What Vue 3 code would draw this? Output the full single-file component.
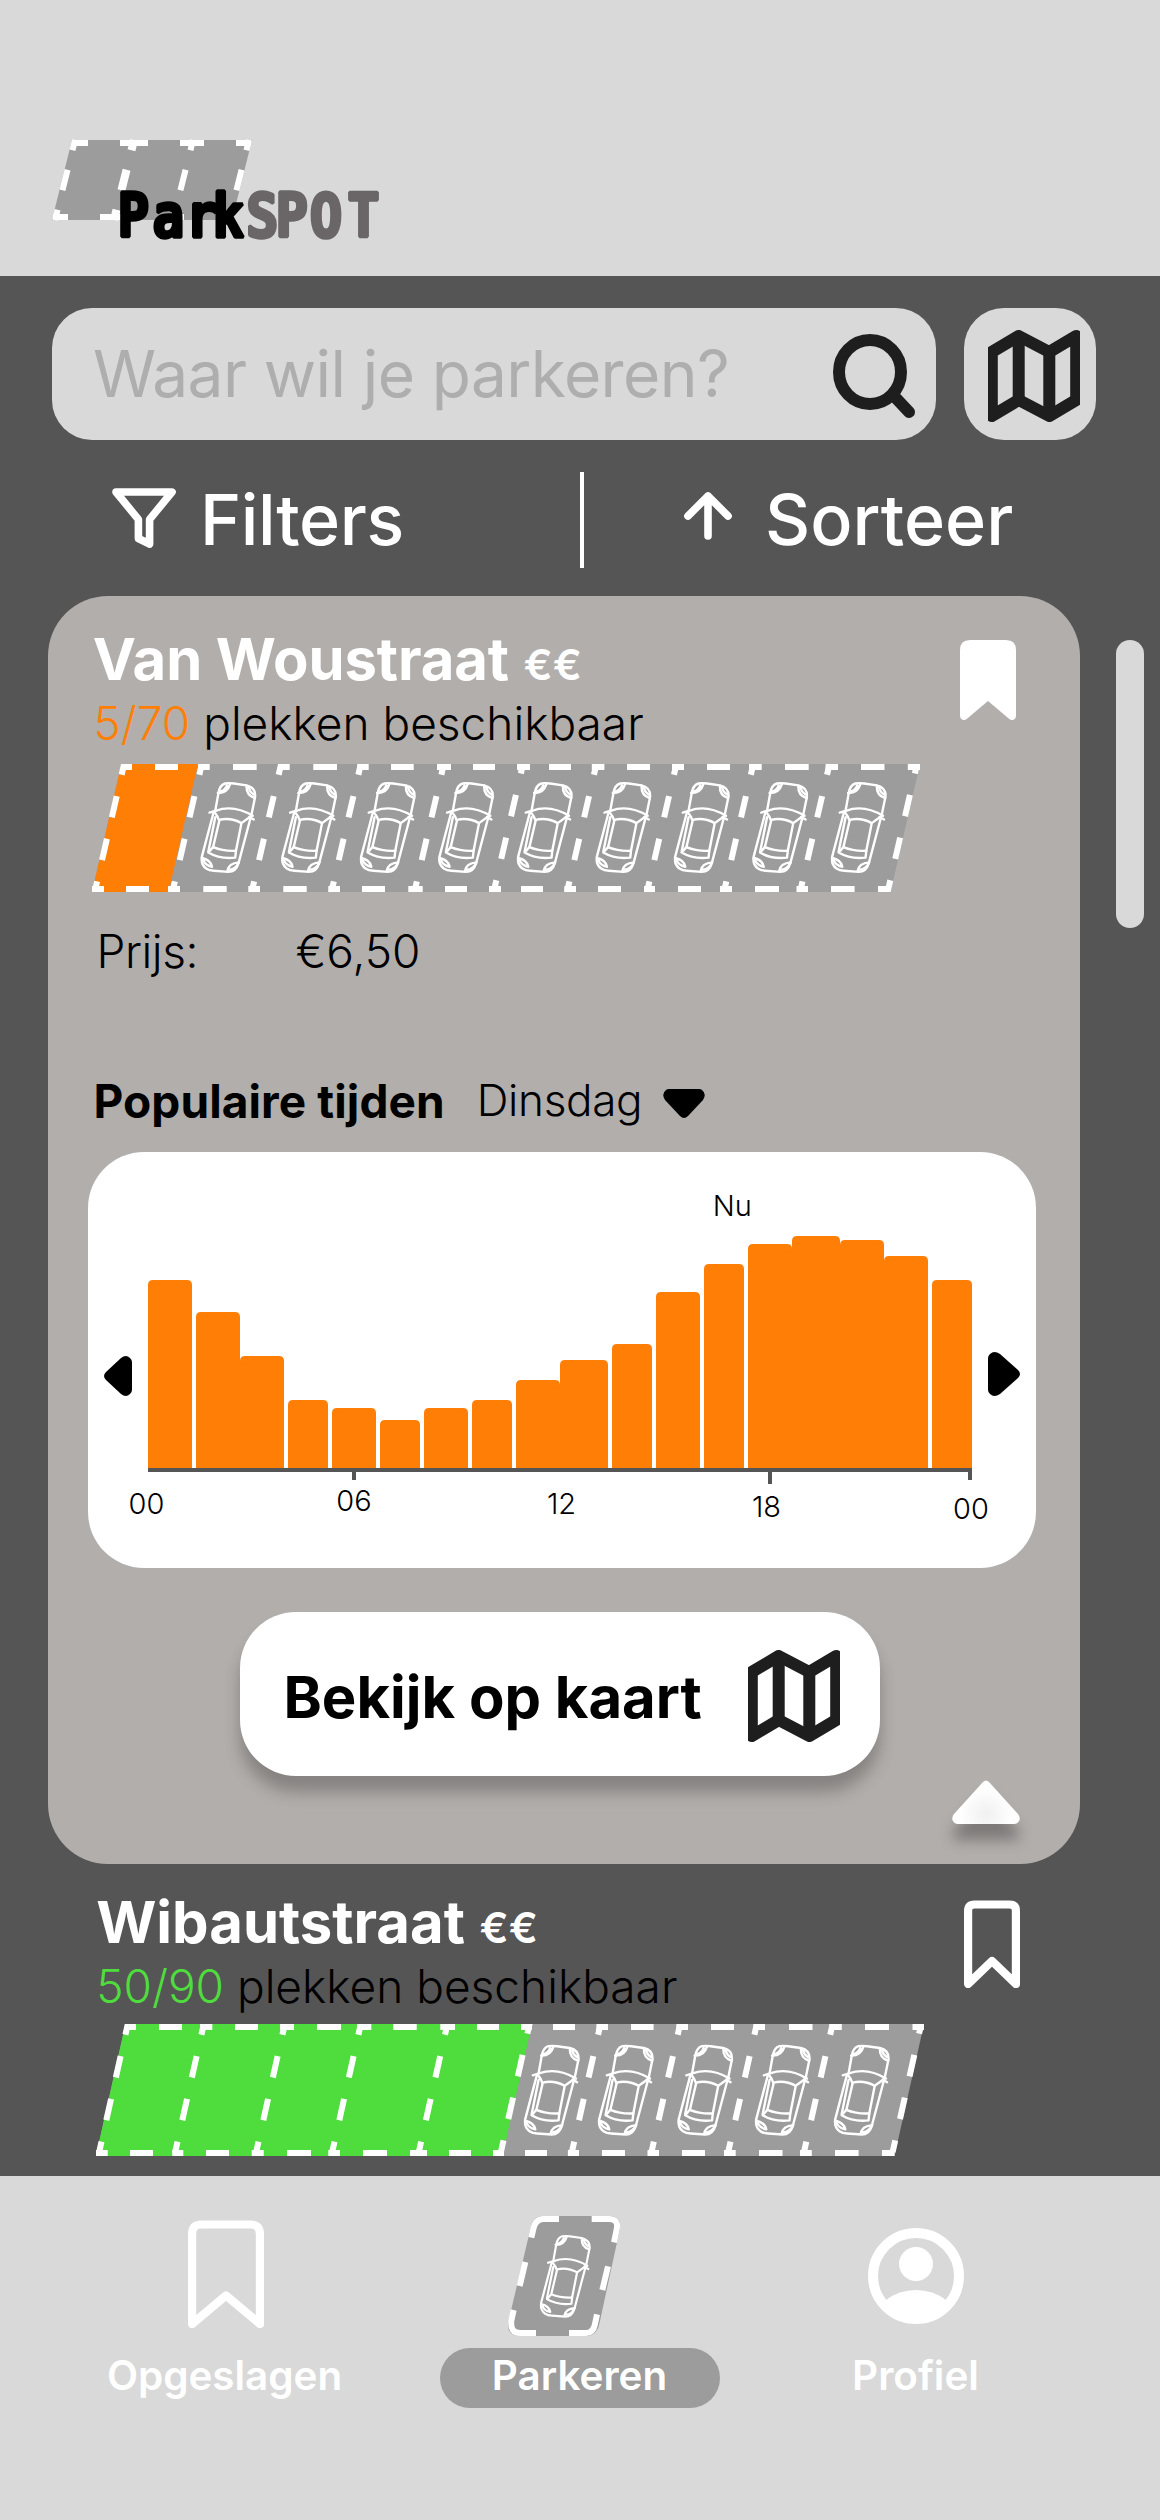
<script setup>
const seg = (list, y) => list.map(([a, b]) => `M${a} ${y}H${b}`).join('')

// Parking strips: dash and car coordinates in px, relative to the strip
const strips = {
  woustraat: {
    w: 828, h: 128, slant: 29.4, fill: '#ff7f06', fillTo: 106, carY: 17.3,
    edges: [29.3, 107, 186.3, 266, 349, 501.6, 581.6, 658.5, 734.7],
    rightEdges: [428.5, 822.5],
    top: seg([[29, 40], [63, 86], [106, 117.7], [141, 164.7], [186, 197.7], [221.3, 245], [265.3, 276.7], [299, 321.7], [345, 359], [381, 403], [425, 438], [457, 479], [499.8, 512.4], [535, 558], [580, 592], [615, 638], [657, 669.7], [693, 716.7], [733.6, 746], [769, 792.5], [815.8, 828]], 3),
    bottom: seg([[0, 12], [34, 57], [76, 88], [111.3, 134.7], [156.3, 168], [191.3, 214.7], [236.3, 248], [270, 293], [316.3, 330.7], [353, 375], [397, 409], [429, 451], [472.3, 484], [506, 529], [552, 563], [586, 609], [628, 640], [663, 687], [704.5, 716], [739, 762.6], [786, 798.6]], 125),
    cars: [108, 188.6, 267.3, 345.6, 424.3, 503, 581.3, 659.8, 738.3]
  },
  wibautstraat: {
    w: 828, h: 132, slant: 29.5, fill: '#4fdd3d', fillTo: 436, carY: 20,
    edges: [29, 105, 186, 262, 348.6, 501.7, 581.3, 658, 733.8],
    rightEdges: [431, 822.7],
    top: seg([[29, 40], [63, 86], [104, 116.3], [139, 162], [184, 198], [221, 245], [261.3, 275.3], [297.3, 320.7], [344.3, 359], [381, 403], [425, 436], [457, 479], [500.4, 512], [535, 557.6], [580.4, 592], [615, 638], [657.6, 669], [693, 716.5], [733.6, 745.8], [769, 793], [816.5, 828]], 3),
    bottom: seg([[0, 11.7], [34, 57], [76.3, 87.3], [110, 133], [155.7, 167.7], [191, 215], [232.3, 244], [267, 291], [314, 331], [353, 375], [397, 408], [429, 451], [471.9, 483], [506, 529], [551.5, 563], [586, 609], [628, 639.7], [663, 686.5], [704, 715.8], [739, 762.6], [786, 798.6]], 129),
    cars: [427.3, 501.3, 580.8, 658.3, 737.3]
  }
}
const stripFor = (k) => strips[k]

// [left, width, height] of each hour bar
const bars = [[60, 44, 188], [108, 44, 156], [152, 44, 112], [200, 40, 68], [244, 44, 60], [292, 40, 48], [336, 44, 60], [384, 40, 68], [428, 44, 88], [472, 48, 108], [524, 40, 124], [568, 44, 176], [616, 40, 204], [660, 44, 224], [704, 48, 232], [752, 44, 228], [796, 44, 212], [844, 40, 188]]
const bar = ([x, w, h]) => `M${x} 316V${316 - h + 5}q0 -5 5 -5h${w - 10}q5 0 5 5V316Z`
const hours = [['00', 58.5, 361.5], ['06', 266, 358.5], ['12', 473.5, 361.5], ['18', 678.5, 364.5], ['00', 883, 367]]
</script>

<template>
  <div class="app">
    <svg class="defs" width="0" height="0">
      <symbol id="car" viewBox="-3 -3 156 253">
        <g fill="none" stroke="#fff" stroke-width="6.6" stroke-linecap="round" stroke-linejoin="round">
          <path d="M39 78L48 28Q52 7 66 3Q75 1 90 3L125 8Q150 14 149 38L138 92" />
          <path d="M46 29Q72 30 80 4M53 25Q66 22 71 8M125 9Q124 36 148 43M132 14Q133 26 145 33" />
          <path d="M23 83L40 78Q90 60 142 92M133 95L145 102" />
          <path d="M34 84L2 205Q-1 226 14 237Q22 243 35 243L75 246Q96 246 103 222L136 98" />
          <path d="M37 82Q46 92 50 106L33 178M39 96L20 190" />
          <path d="M50 103Q82 96 111 112L136 94M111 112L96 188" />
          <path d="M33 178Q62 190 96 188L94 207Q52 212 20 193L33 178" />
          <path d="M3 208Q27 214 30 232Q12 228 6 214M72 244Q76 222 104 220Q96 238 78 240" />
        </g>
      </symbol>
      <symbol id="map" viewBox="0 0 92 92">
        <g fill="none" stroke="#1e1e1e" stroke-width="12" stroke-linejoin="round">
          <path d="M3.8 22V86L30.7 70L61.3 86L88.2 70V6L61.3 22L30.7 6Z" />
          <path d="M30.7 6V70M61.3 22V86" />
        </g>
      </symbol>
    </svg>

    <header class="top">
      <svg class="logo" width="360" height="124" viewBox="0 0 360 124">
        <path d="M20 0H200L180 80H0Z" fill="#9c9c9c" />
        <g fill="none" stroke="#fff" stroke-width="6">
          <path d="M20 3H36M68 3H96M128 3H152M184 3H199M1 77H16M48 77H76M113 77H132M165 77H180" />
          <g stroke-dasharray="10.5 20.1 21.2 20.1 10.5">
            <path d="M23 0L3 80M141 0L121 80M197 0L177 80" />
            <path d="M82 0L62 80" stroke-width="8" />
          </g>
        </g>
        <g class="wordmark">
          <text y="97.2" x="74.5 114.3 152.3 182.4" transform="scale(.88 1)">Park</text>
          <text y="97.2" x="215.500 248.3 286.5 328" transform="scale(.9 1)" class="spot">SPOT</text>
        </g>
      </svg>
    </header>

    <div class="searchrow">
      <div class="search">
        <span class="placeholder">Waar wil je parkeren?</span>
        <svg width="82" height="84" viewBox="0 0 82 84" fill="none" stroke="#1e1e1e" stroke-width="12" stroke-linecap="round">
          <ellipse cx="37" cy="38" rx="31" ry="32" />
          <path d="M60 61L76 78" />
        </svg>
      </div>
      <div class="mapbtn"><svg width="92" height="92"><use href="#map" /></svg></div>
    </div>

    <div class="tools">
      <div class="tool filter">
        <svg width="64" height="60" viewBox="0 0 64 60" fill="none" stroke="#fff" stroke-width="7.6" stroke-linejoin="round">
          <path d="M60 4H4L26.4 31.4V50.5L37.6 56V31.4Z" />
        </svg>
        <span>Filters</span>
      </div>
      <div class="divider"></div>
      <div class="tool sort">
        <svg width="48" height="48" viewBox="0 0 48 48" fill="none" stroke="#fff" stroke-width="7.6" stroke-linecap="round" stroke-linejoin="round">
          <path d="M24 44V4M4 24L24 4L44 24" />
        </svg>
        <span>Sorteer</span>
      </div>
    </div>

    <main class="content">
      <div class="list">
        <section class="card">
          <div class="head">
            <div class="info">
              <h2>Van Woustraat<span class="euro">€€</span></h2>
              <p class="spots"><span class="few">5/70</span> plekken beschikbaar</p>
            </div>
            <svg class="mark" width="56" height="80" viewBox="0 0 56 80">
              <path fill="#fff" d="M0 10Q0 0 10 0H46Q56 0 56 10V76Q55.5 80 52 80Q50.5 80 49 78.7L28 61L7 78.7Q5.5 80 4 80Q.5 80 0 76Z" />
            </svg>
          </div>

          <svg v-for="s in [stripFor('woustraat')]" :key="s.fill" class="strip" :width="s.w" :height="s.h" :viewBox="`0 0 ${s.w} ${s.h}`">
            <path :d="`M${s.slant} 0H${s.w}L${s.w - s.slant} ${s.h}H0Z`" fill="#9c9c9c" />
            <path :d="`M${s.slant} 0H${s.fillTo}L${s.fillTo - s.slant} ${s.h}H0Z`" :fill="s.fill" />
            <g fill="none" stroke="#fff" stroke-width="6">
              <path :d="s.top" /><path :d="s.bottom" />
              <path v-for="x in s.edges" :key="x" class="edge" :d="`M${x + 2.8} 0l-${s.slant} ${s.h}`" />
              <path v-for="x in s.rightEdges" :key="x" class="edge right" :d="`M${x + 2.8} -1.2l-${s.slant} ${s.h}`" />
            </g>
            <use v-for="x in s.cars" :key="x" href="#car" :x="x" :y="s.carY" width="56.7" height="92" />
          </svg>

          <div class="price"><span class="plabel">Prijs:</span><span>€6,50</span></div>

          <div class="times">
            <strong>Populaire tijden</strong>
            <span class="day">Dinsdag</span>
            <svg width="42" height="29" viewBox="0 0 42 29"><path d="M17 27L2 11Q-2 5 3 1Q4 0 6 0H36Q38 0 39 1Q44 5 40 11L25 27Q21 31 17 27Z" /></svg>
          </div>

          <svg class="chart" width="948" height="416" viewBox="0 0 948 416">
            <text x="644.3" y="64">Nu</text>
            <path v-for="b in bars" :key="b[0]" :d="bar(b)" fill="#ff7f06" />
            <path d="M60 316H884V328H880V320H684V332H680V320H268V328H264V320H60Z" fill="#555" />
            <text v-for="h in hours" :key="h[1]" :x="h[1]" :y="h[2]">{{ h[0] }}</text>
            <path transform="translate(16 204)" d="M2 24Q-2 20 2 16L17 2Q22 -2 26 2Q28 4 28 6V34Q28 36 26 38Q22 42 17 38Z" />
            <path transform="translate(900 200)" d="M30 18Q34 22 30 26L12 42Q6 46 2 42Q0 40 0 38V6Q0 4 2 2Q6 -2 12 2Z" />
          </svg>

          <button class="open">
            <span>Bekijk op kaart</span>
            <svg width="92" height="92"><use href="#map" /></svg>
          </button>

          <div class="fold">
            <svg width="68" height="44" viewBox="0 0 68 44">
              <defs>
                <radialGradient id="soft" cx="34" cy="34" r="26" gradientUnits="userSpaceOnUse">
                  <stop offset="0" stop-color="#f0f0f0" /><stop offset="1" stop-color="#fff" />
                </radialGradient>
              </defs>
              <path fill="url(#soft)" d="M31 2Q34 -1 37 2L66 34Q69 38 67 41Q65.5 44 62 44H6Q2.5 44 1 41Q-1 38 2 34Z" />
            </svg>
          </div>
        </section>

        <section class="item">
          <div class="head">
            <div class="info">
              <h2>Wibautstraat<span class="euro">€€</span></h2>
              <p class="spots"><span class="many">50/90</span> plekken beschikbaar</p>
            </div>
            <svg class="mark" width="56" height="88" viewBox="0 0 56 88" fill="none" stroke="#fff" stroke-width="8.2" stroke-linejoin="round">
              <path d="M4.1 84V11Q4.1 4.5 10.5 4.5H45.5Q51.9 4.5 51.9 11V84L28 61Z" />
            </svg>
          </div>

          <svg v-for="s in [stripFor('wibautstraat')]" :key="s.fill" class="strip" :width="s.w" :height="s.h" :viewBox="`0 0 ${s.w} ${s.h}`">
            <path :d="`M${s.slant} 0H${s.w}L${s.w - s.slant} ${s.h}H0Z`" fill="#9c9c9c" />
            <path :d="`M${s.slant} 0H${s.fillTo}L${s.fillTo - s.slant} ${s.h}H0Z`" :fill="s.fill" />
            <g fill="none" stroke="#fff" stroke-width="6">
              <path :d="s.top" /><path :d="s.bottom" />
              <path v-for="x in s.edges" :key="x" class="edge" :d="`M${x + 2.8} 0l-${s.slant} ${s.h}`" />
              <path v-for="x in s.rightEdges" :key="x" class="edge right" :d="`M${x + 2.8} -1.2l-${s.slant} ${s.h}`" />
            </g>
            <use v-for="x in s.cars" :key="x" href="#car" :x="x" :y="s.carY" width="56.7" height="92" />
          </svg>
        </section>
      </div>
      <div class="scrollbar"></div>
    </main>

    <nav class="nav">
      <div class="tab">
        <div class="icon saved">
          <svg width="76" height="108" viewBox="0 0 76 108" fill="none" stroke="#fff" stroke-width="8.2" stroke-linejoin="round">
            <path d="M4.1 104V14Q4.1 4.5 13 4.5H63Q71.9 4.5 71.9 14V104L38 75.5Z" />
          </svg>
        </div>
        <span class="label shift">Opgeslagen</span>
      </div>
      <div class="tab active">
        <div class="icon park">
          <svg width="112" height="120" viewBox="24 48 336 360">
            <path fill="#9c9c9c" d="M126 48H326Q367 48 359 90L298 372Q290 408 258 408H58Q18 408 25 365L92 84Q98 48 128 48Z" />
            <path fill="none" stroke="#fff" stroke-width="18" d="M94 113L100 87Q106 57 130 57H177M275 57H326Q357 57 350 88L342 127M76 186L59 258M324 199L307 270M41 330L34 362Q30 399 60 399H108M207 399H258Q280 399 285 372L291 343" />
            <use href="#car" x="118" y="103" width="155" height="251" />
          </svg>
        </div>
        <span class="label">Parkeren</span>
      </div>
      <div class="tab">
        <div class="icon">
          <svg width="96" height="96" viewBox="0 0 96 96" fill="#fff">
            <circle cx="48" cy="48" r="43" fill="none" stroke="#fff" stroke-width="10" />
            <circle cx="48" cy="36" r="17" />
            <path d="M18 72Q31 62 48 62Q65 62 78 72L80 76A43 43 0 0 1 16 76Z" />
          </svg>
        </div>
        <span class="label">Profiel</span>
      </div>
    </nav>
  </div>
</template>

<style>
body { margin: 0; background: #555; }
</style>

<style scoped>
.app {
  width: 1160px;
  height: 2520px;
  display: flex;
  flex-direction: column;
  background: #555;
  font-family: Inter, "Liberation Sans", sans-serif;
  overflow: hidden;
}
.defs { position: absolute; }
svg { display: block; flex: none; }
.top { height: 276px; box-sizing: border-box; padding: 140px 0 0 52px; background: #d9d9d9; flex: none; }
.logo { overflow: visible; }
.wordmark { font: 700 60px "DejaVu Sans Mono", monospace; stroke: #000; stroke-width: 3.4; stroke-linejoin: bevel; }
.wordmark .spot { fill: #6a6668; stroke: #6a6668; }

.searchrow { display: flex; gap: 28px; padding: 32px 0 0 52px; }
.search {
  width: 884px;
  height: 132px;
  box-sizing: border-box;
  padding: 0 21px 0 41px;
  border-radius: 40px;
  background: #d9d9d9;
  display: flex;
  align-items: center;
  justify-content: space-between;
}
.placeholder { font-size: 64px; font-weight: 400; letter-spacing: -.6px; line-height: 132px; color: #aeaeae; white-space: nowrap; }
.search svg { margin-top: 4px; }
.mapbtn { width: 132px; height: 132px; border-radius: 40px; background: #d9d9d9; display: flex; align-items: center; justify-content: center; }
.mapbtn svg { margin: 4px 0 0 8px; }

.tools { display: flex; height: 96px; margin: 32px 0 28px; align-items: center; color: #fff; font-size: 70px; font-weight: 500; line-height: 96px; flex: none; }
.tool { display: flex; align-items: center; }
.filter { width: 468px; padding-left: 112px; gap: 24px; letter-spacing: -.4px; }
.filter svg { margin-top: -4px; }
.divider { width: 4px; height: 96px; background: #fff; }
.sort { padding-left: 100px; gap: 33px; }
.sort svg { margin-top: -8px; }

.content { display: flex; height: 1580px; padding-left: 48px; align-items: flex-start; flex: none; }
.list { width: 1032px; }
.scrollbar { width: 28px; height: 288px; margin: 44px 0 0 36px; border-radius: 14px; background: #d9d9d9; }
.card { height: 1268px; box-sizing: border-box; padding: 28px 0 0 44px; border-radius: 60px; background: #b2aeac; }
.item { padding: 23px 0 0 48px; }
.head { display: flex; justify-content: space-between; }
.card .head { padding: 0 64px 13px 1.5px; }
.item .head { padding: 0 60px 10px .2px; }
.card .mark { margin-top: 16px; }
.item .mark { margin-top: 13px; }
h2 { margin: 0 0 1px; font-size: 58px; font-weight: 700; line-height: 70px; height: 70px; color: #fff; white-space: nowrap; }
.card h2 { margin-left: -.7px; letter-spacing: -.1px; }
.euro { margin-left: 14.5px; font-size: 43px; font-weight: 600; line-height: 1; letter-spacing: 0; }
.spots { margin: 0; font-size: 46px; font-weight: 300; line-height: 56px; color: #000; white-space: nowrap; }
.few { color: #ff7f06; }
.many { color: #4fdd3d; }
.edge { stroke-dasharray: 11 21.9 21.9 21.9 21.9 21.9 12; }

.price { display: flex; margin: 31px 0 0 4.4px; font-size: 46px; font-weight: 300; line-height: 56px; }
.plabel { width: 199px; letter-spacing: -.4px; }
.times { display: flex; align-items: center; margin: 94px 0 23px 1.5px; font-size: 46px; line-height: 56px; white-space: nowrap; }
.times strong { font-size: 46px; font-weight: 700; letter-spacing: .1px; }
.day { margin: -2px 0 0 32px; font-size: 44px; font-weight: 300; letter-spacing: -.3px; }
.times svg { margin: 5px 0 0 21px; }

.chart { margin-left: -4px; border-radius: 56px; background: #fff; font-size: 29px; font-weight: 300; text-anchor: middle; }

.open {
  display: flex;
  align-items: center;
  justify-content: space-between;
  width: 640px;
  height: 164px;
  box-sizing: border-box;
  margin: 44px 0 0 148px;
  padding: 0 40px 0 43.5px;
  border: 0;
  border-radius: 56px;
  background: #fff;
  box-shadow: 0 16px 16px rgba(0, 0, 0, .25);
  color: #000;
  font: 700 58px/70px Inter, sans-serif;
  white-space: nowrap;
}
.open span { margin-top: 6px; }
.open svg { margin-top: 4px; }
.fold { display: flex; justify-content: flex-end; padding: 4px 60px 0 0; }
.fold svg { filter: drop-shadow(0 16px 7px rgba(0, 0, 0, .3)); }

.nav { display: flex; height: 344px; box-sizing: border-box; padding: 40px 0 0 86px; background: #d9d9d9; flex: none; }
.tab { width: 280px; margin-right: 74px; display: flex; flex-direction: column; align-items: center; }
.tab.active { margin-right: 56px; }
.icon { height: 120px; display: flex; align-items: center; }
.saved svg { margin-top: -4px; }
.park svg { margin-right: 32px; }
.label { width: 280px; height: 60px; margin-top: 12px; border-radius: 30px; text-align: center; color: #fff; font-size: 40.4px; font-weight: 600; line-height: 55px; text-indent: -1px; }
.label.shift { text-indent: -3px; }
.active .label { background: #9c9c9c; }
</style>
